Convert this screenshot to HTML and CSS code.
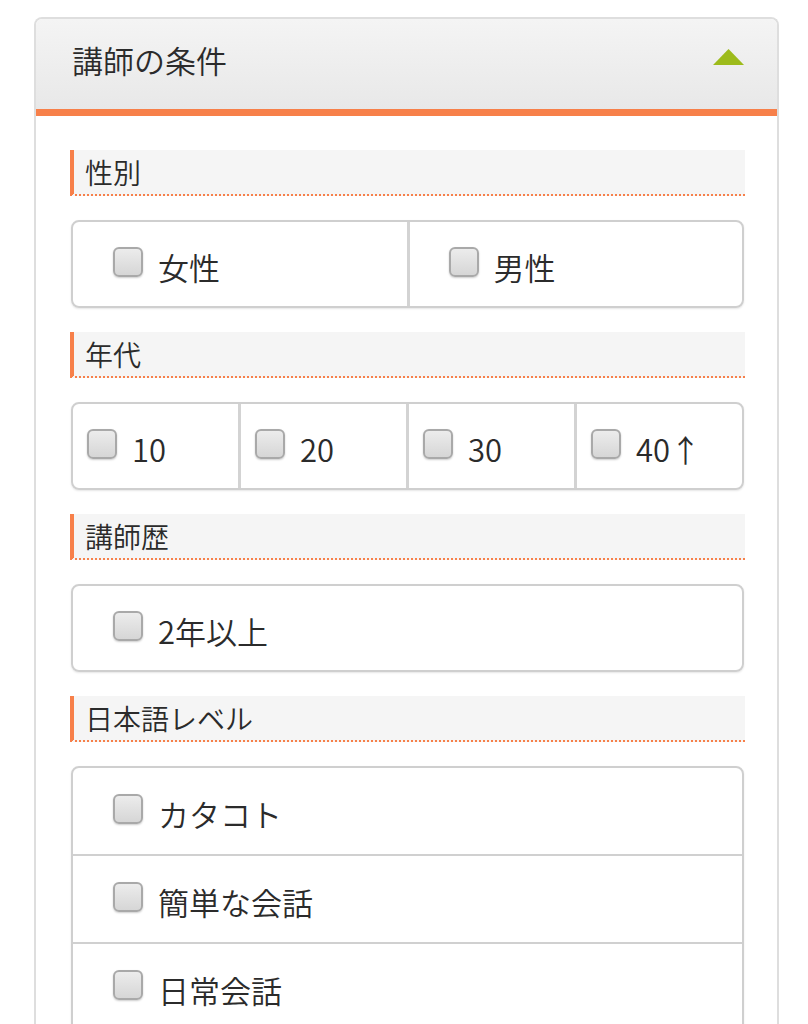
FILE: index.html
```html
<!DOCTYPE html>
<html lang="ja">
<head>
    <meta charset="UTF-8">
    <meta name="viewport" content="width=device-width, initial-scale=1.0">
    <title>講師の条件</title>
    <link rel="stylesheet" href="styles.css">
</head>
<body>
    <div class="panel">
        <div class="panel-header">
            <h2>講師の条件</h2>
            <svg class="toggle" width="31" height="16" viewBox="0 0 31 16">
                <polygon points="15.5,0 31,16 0,16" fill="#9dbb1b"/>
            </svg>
        </div>
        <div class="panel-body">
            <h3 class="cond-title">性別</h3>
            <div class="options cols-2">
                <label class="option"><input type="checkbox"><span>女性</span></label>
                <label class="option"><input type="checkbox"><span>男性</span></label>
            </div>

            <h3 class="cond-title">年代</h3>
            <div class="options cols-4">
                <label class="option"><input type="checkbox"><span>10</span></label>
                <label class="option"><input type="checkbox"><span>20</span></label>
                <label class="option"><input type="checkbox"><span>30</span></label>
                <label class="option"><input type="checkbox"><span>40↑</span></label>
            </div>

            <h3 class="cond-title">講師歴</h3>
            <div class="options cols-1">
                <label class="option"><input type="checkbox"><span>2年以上</span></label>
            </div>

            <h3 class="cond-title">日本語レベル</h3>
            <div class="options rows">
                <label class="option"><input type="checkbox"><span>カタコト</span></label>
                <label class="option"><input type="checkbox"><span>簡単な会話</span></label>
                <label class="option"><input type="checkbox"><span>日常会話</span></label>
            </div>
        </div>
    </div>
</body>
</html>
```

FILE: styles.css
```css
body {
    margin: 0;
    padding: 0;
    background: #fff;
    color: #2b2b2b;
    font-family: "Noto Sans CJK JP", "Noto Sans", sans-serif;
    font-weight: 350;
}
.panel {
    margin: 17px 0 0 34px;
    width: 745px;
    box-sizing: border-box;
    border: 2px solid #dedede;
    border-bottom: none;
    border-radius: 8px 8px 0 0;
    min-height: 1100px;
}
.panel-header {
    display: flex;
    align-items: center;
    justify-content: space-between;
    height: 90px;
    padding: 0 33px 0 36px;
    background: linear-gradient(#f4f4f4, #e8e8e8);
    border-bottom: 7px solid #f7804a;
    border-radius: 6px 6px 0 0;
}
.panel-header h2 {
    margin: -9px 0 0;
    font-size: 31px;
    font-weight: 350;
}
.toggle {
    display: block;
    margin-top: -15px;
}
.panel-body {
    padding: 34px 32px 0 34px;
}
.cond-title {
    margin: 0;
    height: 44px;
    line-height: 44px;
    padding-left: 11px;
    font-size: 28px;
    font-weight: 350;
    background: #f5f5f5;
    border-left: 4px solid #f7804a;
    border-bottom: 2px dotted #f7804a;
}
.options {
    display: flex;
    margin: 24px 1px;
    border: 2px solid #cfcfcf;
    border-radius: 8px;
    box-shadow: 0 1px 2px rgba(0, 0, 0, 0.1);
    overflow: hidden;
}
.option {
    display: flex;
    align-items: center;
    flex: 1;
    height: 84px;
    padding-left: 40px;
    font-size: 31px;
    cursor: pointer;
}
.option + .option {
    border-left: 3px solid #d3d3d3;
}
.cols-2 .option + .option {
    padding-left: 39px;
}
.cols-4 .option {
    padding-left: 14px;
}
.rows {
    flex-direction: column;
}
.rows .option {
    flex: none;
    height: 86px;
}
.rows .option + .option {
    border-left: none;
    border-top: 2px solid #d0d0d0;
}
.option input {
    appearance: none;
    -webkit-appearance: none;
    width: 30px;
    height: 30px;
    margin: -4px 15px 0 0;
    border: 2px solid #a9a9a9;
    border-radius: 6px;
    background: linear-gradient(#ececec, #d6d6d6);
    box-shadow: 0 1px 2px rgba(0, 0, 0, 0.2);
    flex: none;
}
.option input:checked {
    background: linear-gradient(#9dbb1b, #7f9a12);
}
.option span {
    padding-top: 4px;
}
```
